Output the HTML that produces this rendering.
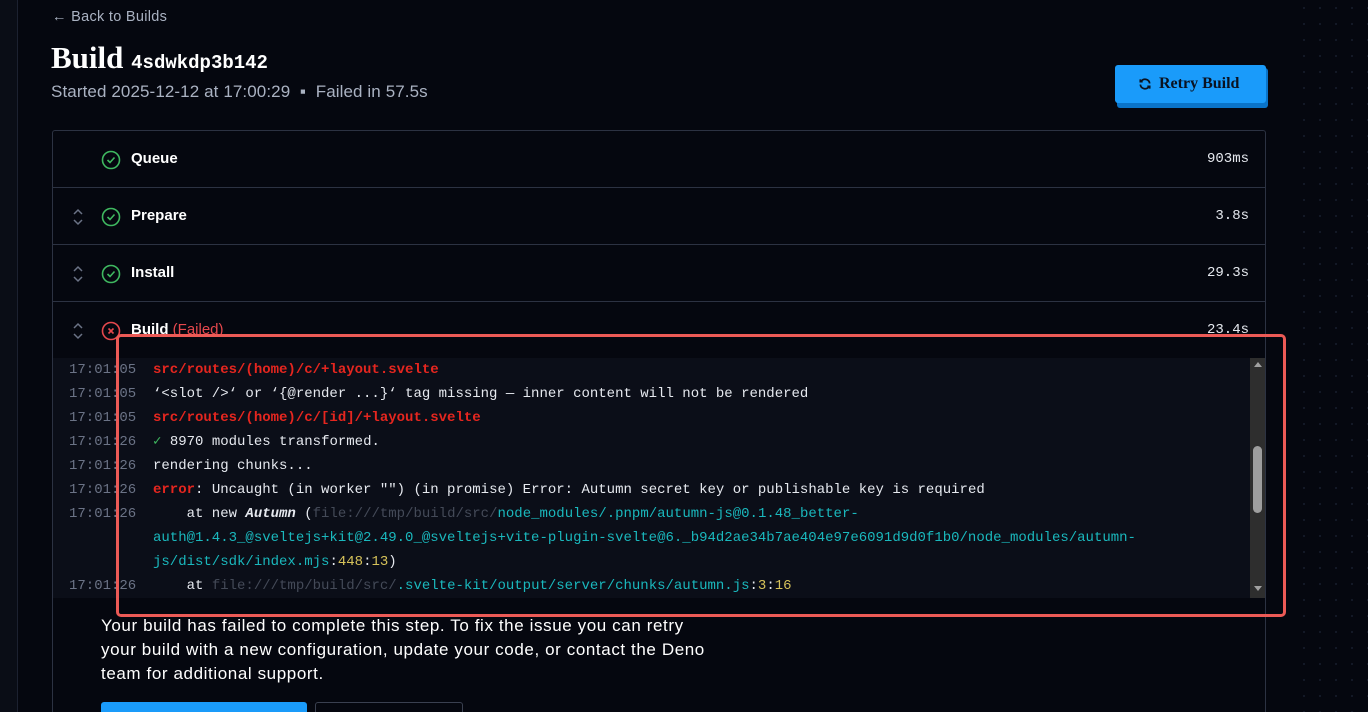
<!DOCTYPE html>
<html style="width:1368px;height:712px;overflow:hidden"><head><meta charset="utf-8"><style>
*{box-sizing:border-box;margin:0;padding:0}
body{width:1368px;height:712px;overflow:hidden;background:#05070f;font-family:"Liberation Sans",sans-serif;color:#e6e9ef;position:relative;
background-image:radial-gradient(circle,#141a28 1px,transparent 1.2px);background-size:16px 16px;}
.main{position:absolute;left:0;top:0;width:1290px;height:712px;background:#05070f}
.side{position:absolute;left:0;top:0;width:18px;height:712px;background:#0a0d16;border-right:1px solid #1c2130}
.mono{font-family:"Liberation Mono",monospace}
.abs{position:absolute}
.box{position:absolute;left:52px;top:130px;width:1214px;height:582px;border:1px solid #2c3242;border-bottom:none;border-radius:3px 3px 0 0;overflow:hidden}
.row{position:absolute;left:0;width:1212px;height:57px;border-bottom:1px solid #2c3242}
.row .nm{position:absolute;left:78px;top:19px;font-weight:bold;font-size:15px;color:#fff}
.row .t{position:absolute;right:16px;top:20px;font-size:14px;color:#e6e9ef}
.chk{position:absolute;left:48px;top:19px}
.chev{position:absolute;left:19px;top:20px}
.log{position:absolute;left:0;top:227px;width:1212px;height:240px;background:#0b0e18;font-family:"Liberation Mono",monospace;font-size:14px;overflow:hidden}
.ln{position:absolute;left:16px;height:24px;line-height:24px;white-space:pre}
.ts{color:#6b7386;display:inline-block;width:84px}
.r{color:#e5261f;font-weight:bold}
.c{color:#1ab8bd}
.g{color:#444a58}
.y{color:#d6c25a}
</style></head><body>
<div class="main"></div>
<div class="side"></div>
<div class="abs" style="left:52px;top:9px;font-size:14.5px;color:#aab2c2;letter-spacing:0.3px">&#8592; Back to Builds</div>
<div class="abs" style="left:51px;top:40px;font-family:'Liberation Serif',serif;font-size:31px;font-weight:bold;color:#fff">Build <span class="mono" style="font-size:19px;font-weight:bold">4sdwkdp3b142</span></div>
<div class="abs" style="left:51px;top:82px;font-size:17px;color:#aab2c2;letter-spacing:0.1px">Started 2025-12-12 at 17:00:29 &nbsp;▪&nbsp; Failed in 57.5s</div>
<div class="abs" style="left:1117px;top:68px;width:151px;height:40px;background:#0a74c9;border-radius:3px"></div>
<div class="abs" style="left:1115px;top:65px;width:151px;height:38px;background:#1a9bfa;border-radius:3px;color:#0a1220;font-family:'Liberation Serif',serif;font-weight:bold;font-size:16px;line-height:38px;padding-left:44px">Retry Build
<svg class="abs" style="left:23px;top:12px" width="14" height="14" viewBox="0 0 24 24" fill="none" stroke="#0a1220" stroke-width="3"><path d="M20 11a8 8 0 0 0-14.9-3M4 4v4h4M4 13a8 8 0 0 0 14.9 3M20 20v-4h-4"/></svg></div>

<div class="box">
<div class="row" style="top:0"><svg class="chk" width="20" height="20"><circle cx="10" cy="10" r="8.5" fill="none" stroke="#3fb860" stroke-width="1.6"/><path d="M6.5 10l2.5 2.5 4.5-5" fill="none" stroke="#3fb860" stroke-width="1.6"/></svg><span class="nm">Queue</span><span class="t mono">903ms</span></div>
<div class="row" style="top:57px"><svg class="chev" width="12" height="18"><path d="M2 6l4-4 4 4M2 12l4 4 4-4" fill="none" stroke="#6b7386" stroke-width="1.5"/></svg><svg class="chk" width="20" height="20"><circle cx="10" cy="10" r="8.5" fill="none" stroke="#3fb860" stroke-width="1.6"/><path d="M6.5 10l2.5 2.5 4.5-5" fill="none" stroke="#3fb860" stroke-width="1.6"/></svg><span class="nm">Prepare</span><span class="t mono">3.8s</span></div>
<div class="row" style="top:114px"><svg class="chev" width="12" height="18"><path d="M2 6l4-4 4 4M2 12l4 4 4-4" fill="none" stroke="#6b7386" stroke-width="1.5"/></svg><svg class="chk" width="20" height="20"><circle cx="10" cy="10" r="8.5" fill="none" stroke="#3fb860" stroke-width="1.6"/><path d="M6.5 10l2.5 2.5 4.5-5" fill="none" stroke="#3fb860" stroke-width="1.6"/></svg><span class="nm">Install</span><span class="t mono">29.3s</span></div>
<div class="row" style="top:171px"><svg class="chev" width="12" height="18"><path d="M2 6l4-4 4 4M2 12l4 4 4-4" fill="none" stroke="#6b7386" stroke-width="1.5"/></svg><svg class="chk" width="20" height="20"><circle cx="10" cy="10" r="8.5" fill="none" stroke="#e5484d" stroke-width="1.6"/><path d="M7.5 7.5l5 5M12.5 7.5l-5 5" stroke="#e5484d" stroke-width="1.6"/></svg><span class="nm">Build <span style="color:#e5484d;font-weight:normal">(Failed)</span></span><span class="t mono">23.4s</span></div>
<div class="log">
<div class="ln" style="top:0"><span class="ts">17:01:05</span><span class="r">src/routes/(home)/c/+layout.svelte</span></div>
<div class="ln" style="top:24px"><span class="ts">17:01:05</span>‘&lt;slot /&gt;‘ or ‘{@render ...}‘ tag missing — inner content will not be rendered</div>
<div class="ln" style="top:48px"><span class="ts">17:01:05</span><span class="r">src/routes/(home)/c/[id]/+layout.svelte</span></div>
<div class="ln" style="top:72px"><span class="ts">17:01:26</span><span style="color:#3fb860">✓</span> 8970 modules transformed.</div>
<div class="ln" style="top:96px"><span class="ts">17:01:26</span>rendering chunks...</div>
<div class="ln" style="top:120px"><span class="ts">17:01:26</span><span class="r">error</span>: Uncaught (in worker "") (in promise) Error: Autumn secret key or publishable key is required</div>
<div class="ln" style="top:144px"><span class="ts">17:01:26</span>    at new <b><i>Autumn</i></b> (<span class="g">file:///tmp/build/src/</span><span class="c">node_modules/.pnpm/autumn-js@0.1.48_better-</span></div>
<div class="ln c" style="top:168px;left:100px">auth@1.4.3_@sveltejs+kit@2.49.0_@sveltejs+vite-plugin-svelte@6._b94d2ae34b7ae404e97e6091d9d0f1b0/node_modules/autumn-</div>
<div class="ln" style="top:192px;left:100px"><span class="c">js/dist/sdk/index.mjs</span>:<span class="y">448</span>:<span class="y">13</span>)</div>
<div class="ln" style="top:216px"><span class="ts">17:01:26</span>    at <span class="g">file:///tmp/build/src/</span><span class="c">.svelte-kit/output/server/chunks/autumn.js</span>:<span class="y">3</span>:<span class="y">16</span></div>
<div class="abs" style="left:1197px;top:0;width:16px;height:240px;background:#2e2e2e"></div>
<div class="abs" style="left:1201px;top:4px;width:0;height:0;border-left:4px solid transparent;border-right:4px solid transparent;border-bottom:5px solid #a0a0a0"></div>
<div class="abs" style="left:1201px;top:228px;width:0;height:0;border-left:4px solid transparent;border-right:4px solid transparent;border-top:5px solid #a0a0a0"></div>
<div class="abs" style="left:1200px;top:88px;width:9px;height:67px;background:#9e9e9e;border-radius:5px"></div>
</div>
<div class="abs" style="left:48px;top:483px;width:660px;font-size:17px;line-height:24px;color:#fff;white-space:nowrap;letter-spacing:0.6px">Your build has failed to complete this step. To fix the issue you can retry<br>your build with a new configuration, update your code, or contact the Deno<br>team for additional support.</div>
<div class="abs" style="left:48px;top:571px;width:206px;height:40px;background:#1a9bfa;border-radius:3px"></div>
<div class="abs" style="left:262px;top:571px;width:148px;height:40px;border:1px solid #3a4050;border-radius:3px"></div>
</div>
<div class="abs" style="left:116px;top:334px;width:1170px;height:283px;border:3px solid #ec5a56;border-radius:5px"></div>
</body></html>
